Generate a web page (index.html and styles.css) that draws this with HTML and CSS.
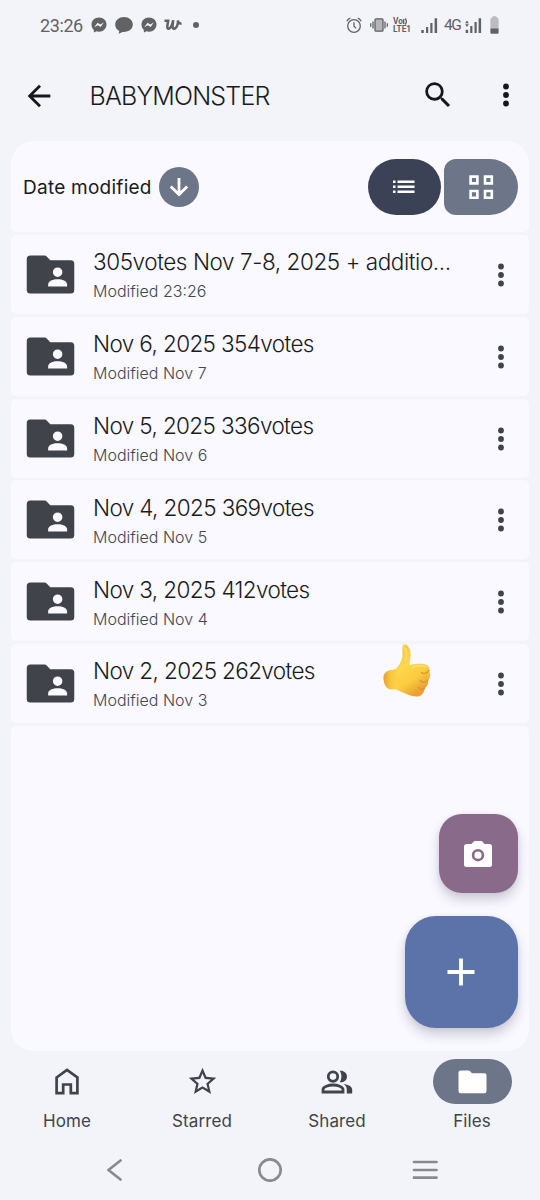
FILE: index.html
```html
<!DOCTYPE html>
<html lang="en">
<head>
<meta charset="utf-8">
<title>BABYMONSTER</title>
<link rel="stylesheet" href="styles.css">
</head>
<body>
<svg class="defs" width="0" height="0">
  <symbol id="folder-shared" viewBox="0 0 24 24"><path fill-rule="evenodd" d="M20.600 6H11.900L10.500 4.500Q10.100 4 9.400 4H3.500Q2 4 2 5.500V18.500Q2 20 3.500 20H20.500Q22 20 22 18.500V7.500Q22 6 20.600 6ZM15 9a2 2 0 1 1 0 4a2 2 0 1 1 0-4ZM19 17H11V16.200C11 14.800 13 14 15 14S19 14.800 19 16.200Z"/></symbol>
  <symbol id="dots" viewBox="0 0 8 24"><circle cx="4" cy="3.500" r="2.900"/><circle cx="4" cy="12" r="2.900"/><circle cx="4" cy="20.500" r="2.900"/></symbol>
  <symbol id="messenger" viewBox="0 0 16 16"><path fill-rule="evenodd" d="M8 .5C3.600.5.5 3.600.5 7.500c0 2.100.9 3.900 2.200 5.200L3 15.500l2.500-1.200c.8.3 1.600.4 2.500.4 4.400 0 7.500-3.200 7.500-7.200S12.400.5 8 .5ZM3.200 10.200 6.600 5.700l2.600 1.900 3.600-2-3.200 4.500-2.700-1.900Z"/></symbol>
</svg>
<main class="phone">
  <header class="status">
    <div class="status-left">
      <span class="clock">23:26</span>
      <svg class="st-msg" viewBox="0 0 16 16"><use href="#messenger"/></svg>
      <svg class="st-chat" viewBox="0 0 18 17"><path d="M9 0C4 0 .2 3.200.2 7.500c0 3 1.600 5.200 4 6.500L3.700 16.700 7.600 14.900C13.800 15.300 17.800 12 17.800 7.500 17.800 3.200 14 0 9 0Z"/></svg>
      <svg class="st-msg" viewBox="0 0 16 16"><use href="#messenger"/></svg>
      <svg class="st-w" viewBox="0 0 18 12"><path d="M.5 1.800H4.200L3.400 6.500C3 9 3.600 9.900 5 9.600C7.300 9 8.400 5 9.200 1.200L8.600 6.500C8.300 9.300 9.200 10.200 10.800 9.500C13 8.500 14.300 4.500 13.900 1.400C14.200 3.800 15.600 4.900 17.500 4.300" fill="none" stroke="#626264" stroke-width="2.500"/></svg>
      <i class="st-dot"></i>
    </div>
    <div class="status-right">
      <svg width="16" height="17" viewBox="0 0 16 17" class="line"><circle cx="8" cy="9" r="6.300"/><path d="M8 5.200V9.200L10.200 11.400M.8 4.300Q2 2 4.300 1.200M15.200 4.300Q14 2 11.700 1.200"/></svg>
      <svg width="18" height="14" viewBox="0 0 18 14"><rect x="5" y=".8" width="8" height="12.400" rx="1" fill="#b5b5b9" stroke="#626264" stroke-width="1.300"/><path class="line" d="M.7 5.300V8.700M3 3.500V10.500M15 3.500V10.500M17.300 5.300V8.700"/></svg>
      <div class="volte"><span>Vo<svg width="5" height="7" viewBox="0 0 5 7" class="line"><path d="M.7 1V6M2 .5Q4.800 3.500 2 6.500"/></svg></span><span>LTE1</span></div>
      <svg class="sig1" width="17" height="15" viewBox="0 0 17 15"><path d="M.3 12h2.500v3H.3zM5 9h2.200v6H5zM9.300 5h2.200v10H9.300zM13.600.3h2.500V15h-2.500z"/></svg>
      <span class="g4">4G</span>
      <svg class="sig2" width="17" height="15" viewBox="0 0 17 15"><path d="M2 2.500 3.900 5.300H.1ZM2 9 .1 6.300H3.900ZM.7 11.800h2.500V15H.7zM5.200 8h2.200v7H5.200zM9.500 4h2.200v11H9.500zM13.600.3h2.500V15h-2.500z"/></svg>
      <svg class="bat" width="9" height="18" viewBox="0 0 9 18"><path fill="#bbbbc0" d="M2 1.500 3 .2H6L7 1.500Q8.600 1.800 8.600 3.500V13H.4V3.500Q.4 1.800 2 1.500Z"/><path d="M.4 12.500H8.600V16.500Q8.600 17.700 7.500 17.700H1.500Q.4 17.700.4 16.500Z"/></svg>
    </div>
  </header>

  <div class="appbar">
    <svg class="back" viewBox="0 0 24 24"><path d="M20 11H7.830l5.590-5.590L12 4l-8 8 8 8 1.410-1.410L7.830 13H20z"/></svg>
    <h1>BABYMONSTER</h1>
    <svg class="search" viewBox="0 0 24 24"><path d="M15.500 14h-.79l-.28-.27A6.470 6.470 0 0 0 16 9.500 6.500 6.500 0 1 0 9.500 16c1.610 0 3.090-.59 4.230-1.570l.27.280v.79l5 4.990L20.490 19zm-6 0C7.010 14 5 11.990 5 9.500S7.010 5 9.500 5 14 7.010 14 9.500 11.990 14 9.500 14z"/></svg>
    <svg class="dots"><use href="#dots"/></svg>
  </div>

  <section class="panel">
    <div class="sort">
      <span class="sort-label">Date modified</span>
      <span class="sort-dir"><svg width="20" height="20" viewBox="0 0 20 20"><path d="M10 1V17.500M1.800 9.500 10 17.500 18.200 9.500" fill="none" stroke="#fff" stroke-width="2.800"/></svg></span>
      <div class="views">
        <span class="view view-list"><svg width="22" height="14" viewBox="0 0 22 14"><path d="M0 .5h2.500V3H0zM4.500.5H21.500V3H4.500zM0 5.500h2.500V8H0zM4.500 5.500H21.500V8H4.500zM0 10.500h2.500V13H0zM4.500 10.500H21.500V13H4.500z"/></svg></span>
        <span class="view view-grid"><svg width="26" height="26" viewBox="0 0 26 26"><path fill="none" stroke="#fff" stroke-width="2.600" d="M2.600 2.600H9.400V9.400H2.600zM17 2.600H23.800V9.400H17zM2.600 17H9.400V23.800H2.600zM17 17H23.800V23.800H17z"/></svg></span>
      </div>
    </div>
    <article class="row"><svg class="folder"><use href="#folder-shared"/></svg><div class="info"><h2 class="long">305votes Nov 7-8, 2025 + additio...</h2><p>Modified 23:26</p></div><svg class="dots"><use href="#dots"/></svg></article>
    <article class="row"><svg class="folder"><use href="#folder-shared"/></svg><div class="info"><h2>Nov 6, 2025 354votes</h2><p>Modified Nov 7</p></div><svg class="dots"><use href="#dots"/></svg></article>
    <article class="row"><svg class="folder"><use href="#folder-shared"/></svg><div class="info"><h2>Nov 5, 2025 336votes</h2><p>Modified Nov 6</p></div><svg class="dots"><use href="#dots"/></svg></article>
    <article class="row"><svg class="folder"><use href="#folder-shared"/></svg><div class="info"><h2>Nov 4, 2025 369votes</h2><p>Modified Nov 5</p></div><svg class="dots"><use href="#dots"/></svg></article>
    <article class="row"><svg class="folder"><use href="#folder-shared"/></svg><div class="info"><h2>Nov 3, 2025 412votes</h2><p>Modified Nov 4</p></div><svg class="dots"><use href="#dots"/></svg></article>
    <article class="row"><svg class="folder"><use href="#folder-shared"/></svg><div class="info"><h2>Nov 2, 2025 262votes</h2><p>Modified Nov 3</p></div><svg class="dots"><use href="#dots"/></svg></article>
    <div class="rest"></div>

    <svg class="thumb" viewBox="0 0 48 54">
      <defs>
        <linearGradient id="skin" x1="0" y1="0" x2=".5" y2="1"><stop offset="0" stop-color="#f7bd3e"/><stop offset=".45" stop-color="#fdd74c"/><stop offset=".75" stop-color="#fbcb3f"/><stop offset="1" stop-color="#e9a137"/></linearGradient>
        <linearGradient id="cuff" x1="0" y1="0" x2="1" y2="0"><stop offset="0" stop-color="#e7a034"/><stop offset=".5" stop-color="#f9c73f"/><stop offset="1" stop-color="#fdd349"/></linearGradient>
      </defs>
      <path fill="url(#skin)" d="M10 27C15 24 19 18 19.500 11C19.700 5 18.500 1 21.500.5C25 0 28 6 27.800 11C27.600 15 26.500 18 26.500 21C31 20 36 19.200 41 20C45 21 47.500 23.500 46 27C48 30 47.300 34 45 36C46 40 43.500 43 41.500 44.500C41.500 48 39 52 35 52.500C27 53 20 48 12 45Z"/>
      <path fill="url(#cuff)" d="M14 25.500C8 25.500 2.500 26.500.8 31C-.4 37 2 43.500 6 45C9 46 12 45.500 15 44.500Z"/>
      <path d="M46 26.500C43 30 40 30 38.500 28.500M45 36C42 39 39 38.500 37.300 36.500M41.500 44.500C38.500 46 36.500 45 35.500 43.500" fill="none" stroke="#df9630" stroke-width="1.500" stroke-linecap="round"/>
      <path d="M21 3C24 6 24 12 22.500 16M30 23C34 21.500 38 21.500 42 22.500" fill="none" stroke="#ffe476" stroke-width="2" stroke-linecap="round" opacity=".7"/>
    </svg>
    <div class="fab fab-camera"><svg width="28" height="26" viewBox="0 0 28 26"><path fill="#fff" fill-rule="evenodd" d="M3 3H7.500L9.500.8Q10.100 0 11 0H17Q17.900 0 18.500.8L20.500 3H25.500Q28 3 28 5.500V23.500Q28 26 25.500 26H2.500Q0 26 0 23.500V5.500Q0 3 3 3ZM14 8a6.200 6.200 0 1 0 0 12.400a6.200 6.200 0 1 0 0-12.400ZM14 10.600a3.600 3.600 0 1 1 0 7.200a3.600 3.600 0 1 1 0-7.200Z"/></svg></div>
    <div class="fab fab-add"><svg width="28" height="28" viewBox="0 0 28 28"><path d="M14 .5V27.500M.5 14H27.500" stroke="#fff" stroke-width="3.800"/></svg></div>
  </section>

  <nav class="tabs">
    <div class="tab"><span class="tab-icon"><svg width="24" height="27" viewBox="0 0 24 27"><path fill="none" stroke="#41434b" stroke-width="2.700" d="M1.600 9.500 12 2 22.400 9.500V25.200H15.800V16.500H8.200V25.200H1.600Z"/></svg></span><span>Home</span></div>
    <div class="tab"><span class="tab-icon"><svg width="33" height="33" viewBox="0 0 24 24"><path fill="#41434b" d="m22 9.240-7.190-.62L12 2 9.190 8.630 2 9.240l5.460 4.730L5.820 21 12 17.270 18.180 21l-1.630-7.030zM12 15.400l-3.760 2.270 1-4.280-3.320-2.880 4.380-.38L12 6.100l1.710 4.040 4.380.38-3.320 2.880 1 4.280z"/></svg></span><span>Starred</span></div>
    <div class="tab"><span class="tab-icon"><svg width="32" height="24" viewBox="0 0 32 24"><g fill="none" stroke="#41434b" stroke-width="2.800"><circle cx="12" cy="6.600" r="4.700"/><path d="M2 22V19.500C2 17 7.500 15 12 15S22 17 22 19.500V22Z"/></g><path fill="#41434b" d="M18.700.7C22.500.2 26 2.700 26 6.500S22.500 12.800 18.700 12.300C21 9 21 4 18.700.7ZM22.500 14C27 14.500 31.200 16.500 31.200 19.500V23.400H25.800V19.500C25.800 17 24.500 15.300 22.500 14Z"/></svg></span><span>Shared</span></div>
    <div class="tab"><span class="tab-icon active"><svg width="29" height="24" viewBox="0 0 29 24"><path fill="#fff" d="M2.500.5H10.500Q11.500.5 12.200 1.200L14 3.300H26.500Q28.500 3.300 28.500 5.300V21Q28.500 23.300 26.500 23.300H2.500Q.5 23.300.5 21V2.700Q.5.5 2.500.5Z"/></svg></span><span>Files</span></div>
  </nav>
  <footer class="sysnav">
    <svg width="15" height="22" viewBox="0 0 15 22"><path d="M13.500 1.500 1.500 11 13.500 20.500"/></svg>
    <svg width="24" height="24" viewBox="0 0 24 24"><circle cx="12" cy="12" r="10.700"/></svg>
    <svg width="26" height="20" viewBox="0 0 26 20"><path d="M2 2H24.500M2 10H24.500M2 17.700H24.500"/></svg>
  </footer>
</main>
</body>
</html>
```
FILE: styles.css
```css
* { box-sizing: border-box; }
body { margin: 0; background: #f3f3fa; font-family: Inter, "Liberation Sans", sans-serif; color: #1a1b21; }
h1, h2, p { margin: 0; font-weight: 400; white-space: nowrap; }
svg { display: block; flex: none; }
.defs { position: absolute; }
.phone { width: 540px; height: 1200px; display: flex; flex-direction: column; overflow: hidden; }

.status { height: 50px; padding: 0 41px 0 40px; display: flex; justify-content: space-between; align-items: center; color: #626264; fill: #626264; font-family: Roboto, sans-serif; }
.status-left, .status-right { display: flex; align-items: center; }
.clock { font-size: 18px; width: 50.5px; letter-spacing: -0.4px; }
.st-msg { width: 16px; height: 16px; }
.st-chat { width: 18px; height: 17px; margin: 0 8px; }
.st-w { width: 18px; height: 12px; margin-left: 7.5px; }
.st-dot { width: 6px; height: 6px; border-radius: 50%; background: #626264; margin-left: 11px; }
.line { fill: none; stroke: #626264; stroke-width: 1.3; }
.status-right > :nth-child(2) { margin-left: 8px; }
.volte { width: 20px; margin-left: 5px; font-size: 8.3px; line-height: 9px; font-weight: 700; }
.volte span { display: flex; align-items: center; height: 8px; }
.sig1 { margin-left: 8px; }
.g4 { font-size: 15.5px; width: 17px; margin: 0 4px 0 6px; letter-spacing: -1.5px; }
.bat { margin-left: 8px; }

.appbar { height: 91px; padding: 0 30px 0 22px; display: flex; align-items: center; fill: #16171c; }
.back { width: 34px; height: 34px; }
.appbar h1 { flex: 1; font-size: 25px; font-weight: 300; padding-left: 33.5px; letter-spacing: -0.8px; }
.search { width: 34px; height: 34px; margin-bottom: 2px; }
.dots { width: 8px; height: 24px; }
.appbar .dots { margin-left: 47px; margin-bottom: 2px; }

.panel { position: relative; height: 910px; margin: 0 11px; display: flex; flex-direction: column; gap: 2.8px; }
.sort, .row, .rest { background: #f9f9ff; border-radius: 5px; }
.sort { height: 91.2px; padding: 0 11.5px 0 12px; border-radius: 23px 23px 5px 5px; display: flex; align-items: center; }
.sort-label { font-size: 19px; width: 136px; white-space: nowrap; letter-spacing: 0.25px; padding-top: 1px; }
.sort-dir { width: 40px; height: 40px; border-radius: 50%; background: #6d7589; display: grid; place-items: center; }
.views { margin-left: auto; display: flex; gap: 3px; fill: #fff; }
.view { width: 73.5px; height: 56px; display: grid; place-items: center; }
.view-list { background: #3c4256; border-radius: 28px; }
.view-grid { background: #6d7589; border-radius: 12px 28px 28px 12px; }
.row { height: 79px; flex: none; padding: 0 24px 0 11px; display: flex; align-items: center; }
.folder { width: 57px; height: 57px; fill: #41434b; }
.info { flex: 1; padding: 2px 0 0 14px; }
.info h2 { font-size: 22.5px; font-weight: 330; line-height: 30px; letter-spacing: -0.62px; }
.info .long { letter-spacing: -0.43px; }
.info p { font-size: 16px; font-weight: 350; line-height: 24px; margin-top: 2px; color: #44464f; }
.row .dots { fill: #41434b; margin-top: 1px; }
.rest { flex: 1; border-radius: 5px 5px 22px 22px; }

.thumb { position: absolute; left: 372px; top: 503px; width: 48px; height: 54px; }
.fab { position: absolute; right: 11.5px; display: grid; place-items: center; box-shadow: 0 7px 12px rgba(50, 40, 60, .2), 0 1px 5px rgba(50, 40, 60, .08); }
.fab-camera { top: 673px; width: 79px; height: 79px; border-radius: 23px; background: #8a6a8a; }
.fab-add { top: 775px; width: 113px; height: 112px; border-radius: 31px; background: #5c73a9; }

.tabs { height: 89px; padding-top: 8px; display: flex; }
.tab { width: 135px; padding-right: 1px; display: flex; flex-direction: column; align-items: center; font-size: 17px; line-height: 22px; color: #41434b; gap: 6px; letter-spacing: 0.1px; }
.tab-icon { width: 79px; height: 45px; border-radius: 23px; display: grid; place-items: center; }
.active { background: #6d7589; }
.sysnav { height: 60px; padding: 0 102px 0 107px; display: grid; grid-template-columns: 151px 1fr auto; align-items: center; fill: none; stroke: #89898e; stroke-width: 2.7; stroke-linecap: round; }
```
